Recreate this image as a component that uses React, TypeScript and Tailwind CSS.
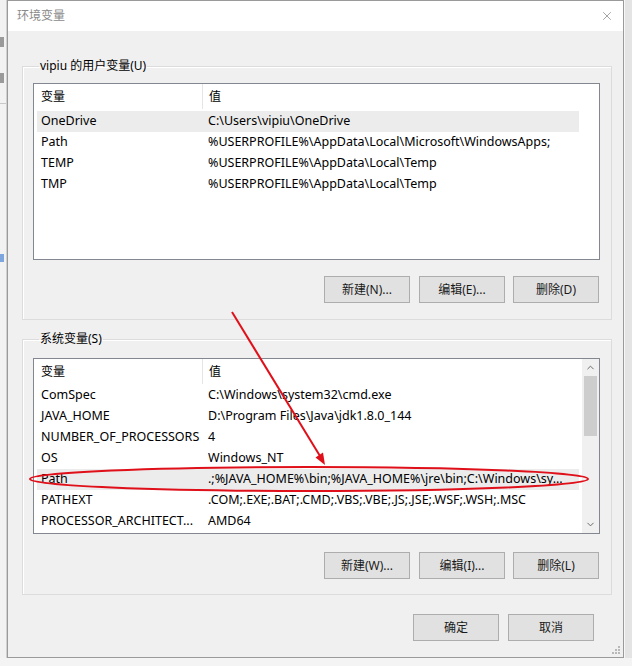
import { X, ChevronUp, ChevronDown } from "lucide-react";

type Row = { name: string; value: string; selected?: boolean };

const userVars: Row[] = [
  { name: "OneDrive", value: "C:\\Users\\vipiu\\OneDrive", selected: true },
  { name: "Path", value: "%USERPROFILE%\\AppData\\Local\\Microsoft\\WindowsApps;" },
  { name: "TEMP", value: "%USERPROFILE%\\AppData\\Local\\Temp" },
  { name: "TMP", value: "%USERPROFILE%\\AppData\\Local\\Temp" },
];

const sysVars: Row[] = [
  { name: "ComSpec", value: "C:\\Windows\\system32\\cmd.exe" },
  { name: "JAVA_HOME", value: "D:\\Program Files\\Java\\jdk1.8.0_144" },
  { name: "NUMBER_OF_PROCESSORS", value: "4" },
  { name: "OS", value: "Windows_NT" },
  { name: "Path", value: ".;%JAVA_HOME%\\bin;%JAVA_HOME%\\jre\\bin;C:\\Windows\\sy...", selected: true },
  { name: "PATHEXT", value: ".COM;.EXE;.BAT;.CMD;.VBS;.VBE;.JS;.JSE;.WSF;.WSH;.MSC" },
  { name: "PROCESSOR_ARCHITECT...", value: "AMD64" },
];

function Button({ label, className = "" }: { label: string; className?: string }) {
  return (
    <div className={`w-[86px] h-[27px] flex items-center justify-center border border-[#adadad] bg-[#e1e1e1] text-[12px] text-[#1a1a1a] ${className}`}>
      {label}
    </div>
  );
}

function VarList({ rows, scroll = false, height, rowsPad }: { rows: Row[]; scroll?: boolean; height: string; rowsPad: string }) {
  return (
    <div className={`flex border border-[#828790] bg-white ${height}`}>
      <div className="flex-1 flex flex-col">
        <div className="flex h-[25px] items-center text-[12px]">
          <div className="w-[168px] pl-[7px]">变量</div>
          <div className="w-px h-full bg-[#e5e5e5]" />
          <div className="pl-[6px]">值</div>
        </div>
        <div className={`flex flex-col px-[3px] ${rowsPad}`}>
          {rows.map((r) => (
            <div
              key={r.name}
              className={`flex h-[21px] w-[542px] items-center text-[12.5px] whitespace-nowrap ${r.selected ? "bg-[#ececec]" : ""}`}
            >
              <div className="w-[171px] pl-[4px] shrink-0">{r.name}</div>
              <div>{r.value}</div>
            </div>
          ))}
        </div>
      </div>
      {scroll && (
        <div className="w-[17px] flex flex-col bg-[#f0f0f0]">
          <div className="h-[17px] flex items-center justify-center text-[#606060]">
            <ChevronUp size={11} strokeWidth={2} />
          </div>
          <div className="flex-1 px-[2px]">
            <div className="h-[60px] bg-[#cdcdcd]" />
          </div>
          <div className="h-[17px] flex items-center justify-center text-[#606060]">
            <ChevronDown size={11} strokeWidth={2} />
          </div>
        </div>
      )}
    </div>
  );
}

export default function App() {
  return (
    <div className="relative w-[632px] h-[666px] bg-[#e9e9e9] overflow-hidden font-['Noto_Sans','Noto_Sans_CJK_SC',sans-serif] text-black">
      <div className="flex h-[658px]">
        {/* background window strip on the left */}
        <div className="w-[7px] flex flex-col items-start bg-[#f2f2f2] border-r border-[#d0d0d0]">
          <div className="mt-[37px] w-[4px] h-[10px] bg-[#9a9a9a]" />
          <div className="mt-[26px] w-[4px] h-[10px] bg-[#9a9a9a]" />
          <div className="mt-[20px] w-[6px] h-px bg-[#c8c8c8]" />
          <div className="mt-[150px] w-[4px] h-[8px] bg-[#7fa6dc]" />
        </div>

        {/* dialog */}
        <div className="w-[617px] flex flex-col border border-[#9a9a9a] bg-[#f0f0f0]">
          <div className="h-[30px] bg-white flex items-center justify-between pl-[9px] pr-[9px]">
            <span className="text-[12px] text-[#8a8a8a]">环境变量</span>
            <X size={14} strokeWidth={1} className="text-[#666]" />
          </div>

          <fieldset className="mt-[27px] ml-[14px] w-[590px] border border-[#dcdcdc] shadow-[inset_1px_1px_0_#ffffff] pl-[10px] pr-[11px] pb-[16px]">
            <legend className="ml-[6px] px-[1px] text-[12px] leading-[16px]">vipiu 的用户变量(U)</legend>
            <div className="mt-[9px]">
              <VarList rows={userVars} height="h-[177px]" rowsPad="pt-[2px]" />
            </div>
            <div className="flex justify-end mt-[16px] mr-[1px]">
              <Button label="新建(N)..." />
              <Button label="编辑(E)..." className="ml-[9px]" />
              <Button label="删除(D)" className="ml-[8px]" />
            </div>
          </fieldset>

          <fieldset className="mt-[11px] ml-[14px] w-[590px] border border-[#dcdcdc] shadow-[inset_1px_1px_0_#ffffff] pl-[10px] pr-[11px] pb-[15px]">
            <legend className="ml-[6px] px-[1px] text-[12px] leading-[16px]">系统变量(S)</legend>
            <div className="mt-[11px]">
              <VarList rows={sysVars} scroll height="h-[176px]" rowsPad="pt-[1px]" />
            </div>
            <div className="flex justify-end mt-[18px] mr-[1px]">
              <Button label="新建(W)..." />
              <Button label="编辑(I)..." className="ml-[9px]" />
              <Button label="删除(L)" className="ml-[8px]" />
            </div>
          </fieldset>

          <div className="flex justify-end mt-[19px] mr-[29px]">
            <Button label="确定" />
            <Button label="取消" className="ml-[9px]" />
          </div>
          <div className="flex-1 flex items-end justify-end pr-[3px] pb-[3px]">
            <div className="grid grid-cols-3 gap-[1px]">
              <span className="w-[2px] h-[2px]" />
              <span className="w-[2px] h-[2px]" />
              <span className="w-[2px] h-[2px] bg-[#b8b8b8]" />
              <span className="w-[2px] h-[2px]" />
              <span className="w-[2px] h-[2px] bg-[#b8b8b8]" />
              <span className="w-[2px] h-[2px] bg-[#b8b8b8]" />
              <span className="w-[2px] h-[2px] bg-[#b8b8b8]" />
              <span className="w-[2px] h-[2px] bg-[#b8b8b8]" />
              <span className="w-[2px] h-[2px] bg-[#b8b8b8]" />
            </div>
          </div>
        </div>

        {/* background strip on the right */}
        <div className="w-[8px] bg-[#e4e4e4] border-l border-[#f7f7f7]" />
      </div>
      <div className="h-[8px] bg-[#f4f4f4]" />

      {/* red annotation drawn over the screenshot */}
      <svg className="absolute inset-0 pointer-events-none" width="632" height="666" viewBox="0 0 632 666">
        <line x1="232" y1="312" x2="320" y2="456" stroke="#e0101a" strokeWidth="2" />
        <polygon points="325,465 315.5,457.5 323,452.5" fill="#e0101a" />
        <ellipse cx="309" cy="479" rx="279" ry="12" fill="none" stroke="#e0101a" strokeWidth="2" />
      </svg>
    </div>
  );
}
